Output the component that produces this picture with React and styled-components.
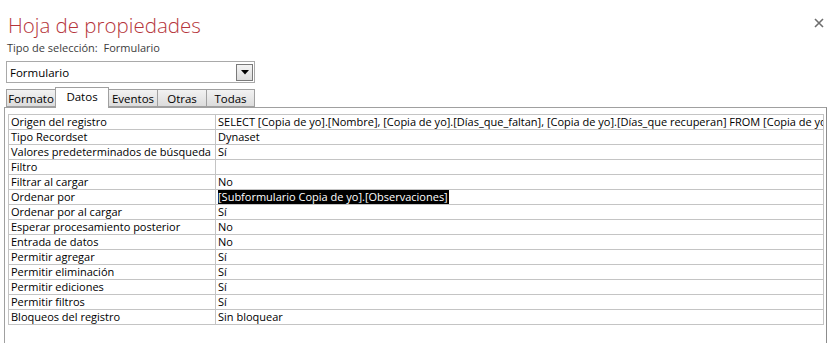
import React from "react";
import styled, { createGlobalStyle } from "styled-components";

const GlobalStyle = createGlobalStyle`
  body {
    margin: 0;
    background: #ffffff;
    font-family: "Open Sans", "Noto Sans", sans-serif;
    color: #000000;
  }
`;

const Sheet = styled.div`
  width: 833px;
  height: 343px;
  overflow: hidden;
  display: flex;
  flex-direction: column;
  padding: 11px 0 0 0;
  box-sizing: border-box;
`;

const Header = styled.div`
  display: flex;
  justify-content: space-between;
  align-items: flex-start;
  padding: 0 0 0 8px;
`;

const Title = styled.h1`
  margin: 0;
  font-family: "Open Sans", sans-serif;
  font-weight: 300;
  font-size: 20.5px;
  line-height: 28px;
  color: #b5343a;
`;

const Close = styled.button`
  border: 0;
  background: none;
  padding: 0;
  margin: 6px 8px 0 0;
  width: 12px;
  height: 12px;
  display: flex;
`;

const SubTitle = styled.div`
  font-size: 11px;
  line-height: 15px;
  color: #3c3c3c;
  padding: 0 0 0 7px;
  margin-top: 1px;
`;

const Select = styled.div`
  margin: 6px 0 0 6px;
  width: 249px;
  height: 22px;
  box-sizing: border-box;
  border: 1px solid #a9a9a9;
  display: flex;
  align-items: center;
  justify-content: space-between;
  padding: 0 1px 0 3px;
  font-size: 11.5px;
`;

const SelectButton = styled.div`
  width: 17px;
  height: 17px;
  box-sizing: border-box;
  border: 1px solid #7a7a7a;
  background: linear-gradient(#f4f4f4, #dcdcdc);
  display: flex;
  align-items: center;
  justify-content: center;
`;

const Tabs = styled.div`
  display: flex;
  align-items: flex-end;
  margin: 4px 0 0 6px;
  height: 20px;
  position: relative;
  z-index: 1;
`;

const Tab = styled.div`
  box-sizing: border-box;
  width: ${(p) => p.$w}px;
  height: ${(p) => (p.$active ? 21 : 18)}px;
  margin-bottom: ${(p) => (p.$active ? -1 : 0)}px;
  border: 1px solid #a0a0a0;
  border-bottom: ${(p) => (p.$active ? "none" : "1px solid #a0a0a0")};
  margin-left: -1px;
  background: ${(p) => (p.$active ? "#ffffff" : "linear-gradient(#f2f2f2, #dcdcdc)")};
  font-size: 11.5px;
  display: flex;
  justify-content: center;
  align-items: ${(p) => (p.$active ? "flex-start" : "center")};
  padding-top: ${(p) => (p.$active ? 1 : 0)}px;
  &:first-child {
    margin-left: 0;
  }
`;

const Panel = styled.div`
  flex: 1;
  margin: 0 6px 0 4px;
  border: 1px solid #a0a0a0;
  border-right-color: #8c8c8c;
  border-bottom: none;
  padding: 6px 2px 0 3px;
`;

const Grid = styled.div`
  display: grid;
  grid-template-columns: 207px 1fr;
  border-top: 1px solid #c4c4c4;
  border-left: 1px solid #c4c4c4;
`;

const Cell = styled.div`
  height: 14px;
  border-right: 1px solid #c4c4c4;
  border-bottom: 1px solid #c4c4c4;
  font-size: 11px;
  line-height: 14px;
  padding-left: 2px;
  white-space: nowrap;
  overflow: hidden;
`;

const Selected = styled.span`
  background: #000000;
  color: #ffffff;
  padding: 0 1px 0 0;
  display: inline-block;
  height: 14px;
`;

const rows = [
  ["Origen del registro", "SELECT [Copia de yo].[Nombre], [Copia de yo].[Días_que_faltan], [Copia de yo].[Días_que recuperan] FROM [Copia de yo] ;"],
  ["Tipo Recordset", "Dynaset"],
  ["Valores predeterminados de búsqueda", "Sí"],
  ["Filtro", ""],
  ["Filtrar al cargar", "No"],
  ["Ordenar por", "[Subformulario Copia de yo].[Observaciones]", true],
  ["Ordenar por al cargar", "Sí"],
  ["Esperar procesamiento posterior", "No"],
  ["Entrada de datos", "No"],
  ["Permitir agregar", "Sí"],
  ["Permitir eliminación", "Sí"],
  ["Permitir ediciones", "Sí"],
  ["Permitir filtros", "Sí"],
  ["Bloqueos del registro", "Sin bloquear"],
];

const tabs = [
  ["Formato", 50],
  ["Datos", 54],
  ["Eventos", 50],
  ["Otras", 50],
  ["Todas", 49],
];

export default function App() {
  return (
    <>
      <GlobalStyle />
      <Sheet>
        <Header>
          <Title>Hoja de propiedades</Title>
          <Close aria-label="Cerrar">
            <svg width="12" height="12" viewBox="0 0 12 12">
              <path d="M2 2 L10 10 M10 2 L2 10" stroke="#6e6e6e" strokeWidth="1.6" />
            </svg>
          </Close>
        </Header>
        <SubTitle>Tipo de selección:&nbsp; Formulario</SubTitle>
        <Select>
          <span>Formulario</span>
          <SelectButton>
            <svg width="8" height="5" viewBox="0 0 8 5">
              <path d="M0 0 H8 L4 4.5 Z" fill="#000" />
            </svg>
          </SelectButton>
        </Select>
        <Tabs>
          {tabs.map(([t, w]) => (
            <Tab key={t} $w={w} $active={t === "Datos"}>
              {t}
            </Tab>
          ))}
        </Tabs>
        <Panel>
          <Grid>
            {rows.map(([k, v, sel]) => (
              <React.Fragment key={k}>
                <Cell>{k}</Cell>
                <Cell>{sel ? <Selected>{v}</Selected> : v}</Cell>
              </React.Fragment>
            ))}
          </Grid>
        </Panel>
      </Sheet>
    </>
  );
}
